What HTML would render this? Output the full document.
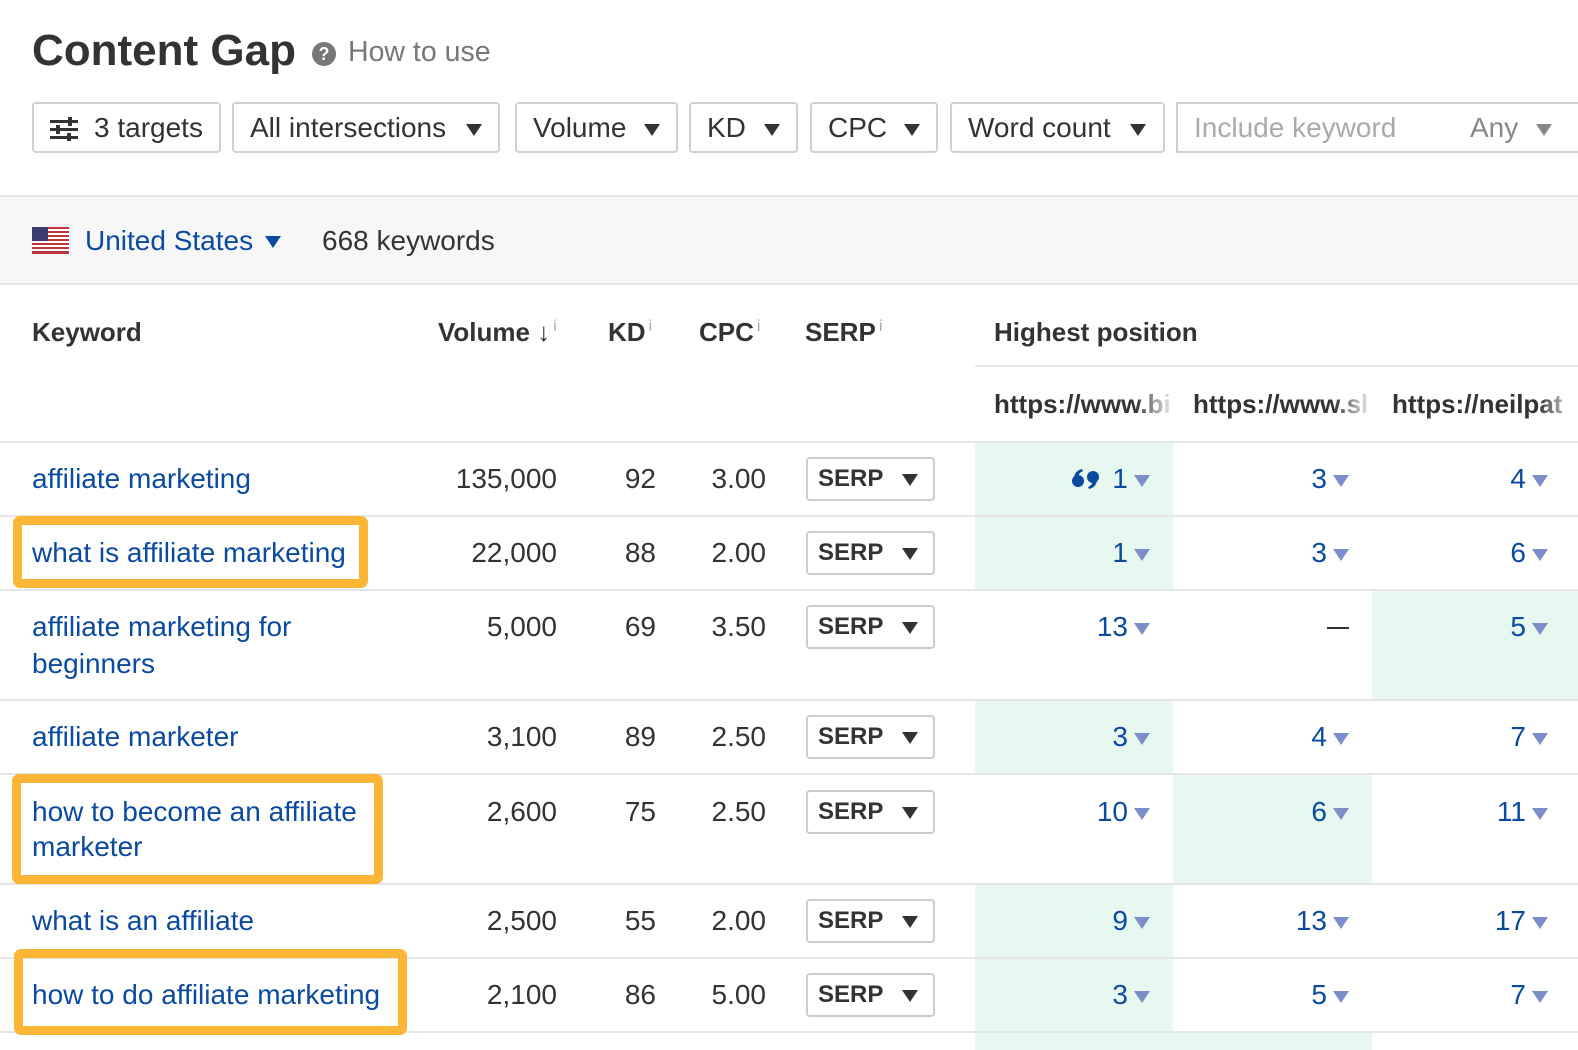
<!DOCTYPE html>
<html><head><meta charset="utf-8"><style>
*{margin:0;padding:0;box-sizing:border-box}
body{width:1578px;height:1050px;overflow:hidden;background:#fff;font-family:"Liberation Sans",Arial,sans-serif;color:#333;position:relative}
.a{position:absolute;white-space:nowrap}
.t{position:absolute;height:40px;line-height:40px;font-size:28px;white-space:nowrap}
.r{text-align:right}
.k{color:#0a4aa0}
.hl{position:absolute;left:0;width:1578px;height:2px;background:#e6e6e6}
.btn{position:absolute;top:102px;height:51px;border:2px solid #d0d0d0;border-radius:4px;font-size:28px;line-height:47px;padding-left:16px;color:#333}
.tri{display:inline-block;width:0;height:0;border-left:8px solid transparent;border-right:8px solid transparent;border-top:12px solid #333;vertical-align:middle}
.serp{position:absolute;left:806px;width:129px;height:44px;border:2px solid #ccc;border-radius:4px;font-size:24px;font-weight:bold;line-height:40px;padding-left:10px;color:#333}
.serp .tri{position:absolute;left:94px;top:15px}
.g{position:absolute;background:#e6f8ef}
.pt{display:inline-block;width:0;height:0;border-left:8px solid transparent;border-right:8px solid transparent;border-top:12px solid #7a8fc9;margin-left:6px;vertical-align:middle}
.pos{position:absolute;height:40px;line-height:40px;font-size:28px;color:#0a4aa0;text-align:right;width:190px}
.box{position:absolute;border:9px solid #fbb635;border-radius:7px}
.hd{position:absolute;font-size:26px;font-weight:bold;color:#333;white-space:nowrap}
.hd sup{font-size:16px;color:#aaa;font-weight:normal;vertical-align:10px;margin-left:3px}
</style></head><body>

<div class="a" style="left:32px;top:26px;font-size:44px;font-weight:bold;color:#333">Content Gap</div>
<div class="a" style="left:312px;top:42px;width:24px;height:24px;border-radius:50%;background:#777;color:#fff;font-size:18px;font-weight:bold;text-align:center;line-height:24px">?</div>
<div class="a" style="left:348px;top:36px;font-size:28.5px;color:#777">How to use</div>

<div class="btn" style="left:32px;width:189px">
<svg style="position:absolute;left:16px;top:13px" width="30" height="24" viewBox="0 0 30 24"><rect x="0" y="3" width="28" height="3" fill="#333"/><rect x="0" y="11" width="28" height="3" fill="#333"/><rect x="0" y="19" width="28" height="3" fill="#333"/><rect x="18" y="0" width="4" height="9" fill="#333"/><rect x="6" y="8" width="4" height="9" fill="#333"/><rect x="17" y="16" width="4" height="8" fill="#333"/></svg>
<span style="margin-left:44px">3 targets</span></div>
<div class="btn" style="left:232px;width:268px">All intersections <span class="tri" style="position:absolute;left:232px;top:20px"></span></div>
<div class="btn" style="left:515px;width:163px">Volume <span class="tri" style="position:absolute;left:127px;top:20px"></span></div>
<div class="btn" style="left:689px;width:109px">KD <span class="tri" style="position:absolute;left:73px;top:20px"></span></div>
<div class="btn" style="left:810px;width:128px">CPC <span class="tri" style="position:absolute;left:92px;top:20px"></span></div>
<div class="btn" style="left:950px;width:215px">Word count <span class="tri" style="position:absolute;left:178px;top:20px"></span></div>
<div class="btn" style="left:1176px;width:420px;border-radius:0;color:#aaa">Include keyword<span style="position:absolute;left:292px;color:#888">Any</span><span class="tri" style="position:absolute;left:358px;top:20px;border-top-color:#888"></span></div>

<div class="a" style="left:0;top:195px;width:1578px;height:90px;background:#f7f7f7;border-top:2px solid #e8e8e8;border-bottom:2px solid #e8e8e8"></div>
<svg class="a" style="left:32px;top:227px" width="37" height="27" viewBox="0 0 37 27"><rect width="37" height="27" fill="#fff"/><g fill="#c0353b"><rect y="0" width="37" height="2"/><rect y="4" width="37" height="2"/><rect y="8" width="37" height="2"/><rect y="12" width="37" height="2"/><rect y="16" width="37" height="2"/><rect y="20" width="37" height="2"/><rect y="24" width="37" height="3"/></g><rect width="16" height="14" fill="#3c3b6e"/></svg>
<div class="t k" style="left:85px;top:221px">United States</div>
<span class="a" style="left:265px;top:236px;border-left:8px solid transparent;border-right:8px solid transparent;border-top:12px solid #0a4aa0"></span>
<div class="t" style="left:322px;top:221px">668 keywords</div>

<div class="hd" style="left:32px;top:317px">Keyword</div>
<div class="hd" style="left:438px;top:317px">Volume ↓<sup>i</sup></div>
<div class="hd" style="left:608px;top:317px">KD<sup>i</sup></div>
<div class="hd" style="left:699px;top:317px">CPC<sup>i</sup></div>
<div class="hd" style="left:805px;top:317px">SERP<sup>i</sup></div>
<div class="hd" style="left:994px;top:317px">Highest position</div>
<div class="a" style="left:975px;top:365px;width:603px;height:2px;background:#e6e6e6"></div>
<div class="hd" style="left:994px;top:389px;width:180px;overflow:hidden">https://www.bi</div>
<div class="hd" style="left:1193px;top:389px;width:178px;overflow:hidden">https://www.sl</div>
<div class="hd" style="left:1392px;top:389px;width:186px;overflow:hidden">https://neilpat</div>
<div class="a" style="left:1135px;top:388px;width:40px;height:34px;background:linear-gradient(90deg,rgba(255,255,255,0),#fff)"></div>
<div class="a" style="left:1333px;top:388px;width:40px;height:34px;background:linear-gradient(90deg,rgba(255,255,255,0),#fff)"></div>
<div class="a" style="left:1538px;top:388px;width:40px;height:34px;background:linear-gradient(90deg,rgba(255,255,255,0),#fff)"></div>

<div class="g" style="left:975px;top:442px;width:198px;height:148px"></div>
<div class="g" style="left:1372px;top:591px;width:206px;height:109px"></div>
<div class="g" style="left:975px;top:701px;width:198px;height:73px"></div>
<div class="g" style="left:1173px;top:775px;width:199px;height:109px"></div>
<div class="g" style="left:975px;top:885px;width:198px;height:165px"></div>
<div class="g" style="left:1173px;top:1033px;width:199px;height:17px"></div>

<div class="hl" style="top:441px"></div>
<div class="hl" style="top:515px"></div>
<div class="hl" style="top:589px"></div>
<div class="hl" style="top:699px"></div>
<div class="hl" style="top:773px"></div>
<div class="hl" style="top:883px"></div>
<div class="hl" style="top:957px"></div>
<div class="hl" style="top:1031px"></div>

<div class="t k" style="left:32px;top:459px">affiliate marketing</div>
<div class="t r" style="left:357px;width:200px;top:459px">135,000</div>
<div class="t r" style="left:556px;width:100px;top:459px">92</div>
<div class="t r" style="left:666px;width:100px;top:459px">3.00</div>
<div class="serp" style="top:457px">SERP<span class="tri"></span></div>
<svg class="a" style="left:1072px;top:469px" width="28" height="20" viewBox="0 0 28 20"><g fill="#0a4aa0"><circle cx="6" cy="12" r="6"/><path d="M2 10 Q2 2 10 0 L11 2 Q6 4 6 10 Z"/><circle cx="21" cy="8" r="6"/><path d="M25 10 Q25 18 17 20 L16 18 Q21 16 21 10 Z"/></g></svg>
<div class="pos" style="left:960px;top:459px">1<span class="pt"></span></div>
<div class="pos" style="left:1159px;top:459px">3<span class="pt"></span></div>
<div class="pos" style="left:1358px;top:459px">4<span class="pt"></span></div>

<div class="t k" style="left:32px;top:533px">what is affiliate marketing</div>
<div class="t r" style="left:357px;width:200px;top:533px">22,000</div>
<div class="t r" style="left:556px;width:100px;top:533px">88</div>
<div class="t r" style="left:666px;width:100px;top:533px">2.00</div>
<div class="serp" style="top:531px">SERP<span class="tri"></span></div>
<div class="pos" style="left:960px;top:533px">1<span class="pt"></span></div>
<div class="pos" style="left:1159px;top:533px">3<span class="pt"></span></div>
<div class="pos" style="left:1358px;top:533px">6<span class="pt"></span></div>

<div class="t k" style="left:32px;top:607px">affiliate marketing for</div>
<div class="t k" style="left:32px;top:644px">beginners</div>
<div class="t r" style="left:357px;width:200px;top:607px">5,000</div>
<div class="t r" style="left:556px;width:100px;top:607px">69</div>
<div class="t r" style="left:666px;width:100px;top:607px">3.50</div>
<div class="serp" style="top:605px">SERP<span class="tri"></span></div>
<div class="pos" style="left:960px;top:607px">13<span class="pt"></span></div>
<div class="a" style="left:1327px;top:627px;width:22px;height:2px;background:#333"></div>
<div class="pos" style="left:1358px;top:607px">5<span class="pt"></span></div>

<div class="t k" style="left:32px;top:717px">affiliate marketer</div>
<div class="t r" style="left:357px;width:200px;top:717px">3,100</div>
<div class="t r" style="left:556px;width:100px;top:717px">89</div>
<div class="t r" style="left:666px;width:100px;top:717px">2.50</div>
<div class="serp" style="top:715px">SERP<span class="tri"></span></div>
<div class="pos" style="left:960px;top:717px">3<span class="pt"></span></div>
<div class="pos" style="left:1159px;top:717px">4<span class="pt"></span></div>
<div class="pos" style="left:1358px;top:717px">7<span class="pt"></span></div>

<div class="t k" style="left:32px;top:792px">how to become an affiliate</div>
<div class="t k" style="left:32px;top:827px">marketer</div>
<div class="t r" style="left:357px;width:200px;top:792px">2,600</div>
<div class="t r" style="left:556px;width:100px;top:792px">75</div>
<div class="t r" style="left:666px;width:100px;top:792px">2.50</div>
<div class="serp" style="top:790px">SERP<span class="tri"></span></div>
<div class="pos" style="left:960px;top:792px">10<span class="pt"></span></div>
<div class="pos" style="left:1159px;top:792px">6<span class="pt"></span></div>
<div class="pos" style="left:1358px;top:792px">11<span class="pt"></span></div>

<div class="t k" style="left:32px;top:901px">what is an affiliate</div>
<div class="t r" style="left:357px;width:200px;top:901px">2,500</div>
<div class="t r" style="left:556px;width:100px;top:901px">55</div>
<div class="t r" style="left:666px;width:100px;top:901px">2.00</div>
<div class="serp" style="top:899px">SERP<span class="tri"></span></div>
<div class="pos" style="left:960px;top:901px">9<span class="pt"></span></div>
<div class="pos" style="left:1159px;top:901px">13<span class="pt"></span></div>
<div class="pos" style="left:1358px;top:901px">17<span class="pt"></span></div>

<div class="t k" style="left:32px;top:975px">how to do affiliate marketing</div>
<div class="t r" style="left:357px;width:200px;top:975px">2,100</div>
<div class="t r" style="left:556px;width:100px;top:975px">86</div>
<div class="t r" style="left:666px;width:100px;top:975px">5.00</div>
<div class="serp" style="top:973px">SERP<span class="tri"></span></div>
<div class="pos" style="left:960px;top:975px">3<span class="pt"></span></div>
<div class="pos" style="left:1159px;top:975px">5<span class="pt"></span></div>
<div class="pos" style="left:1358px;top:975px">7<span class="pt"></span></div>

<div class="box" style="left:13px;top:516px;width:355px;height:72px"></div>
<div class="box" style="left:12px;top:774px;width:371px;height:110px"></div>
<div class="box" style="left:14px;top:949px;width:393px;height:86px"></div>
</body></html>
